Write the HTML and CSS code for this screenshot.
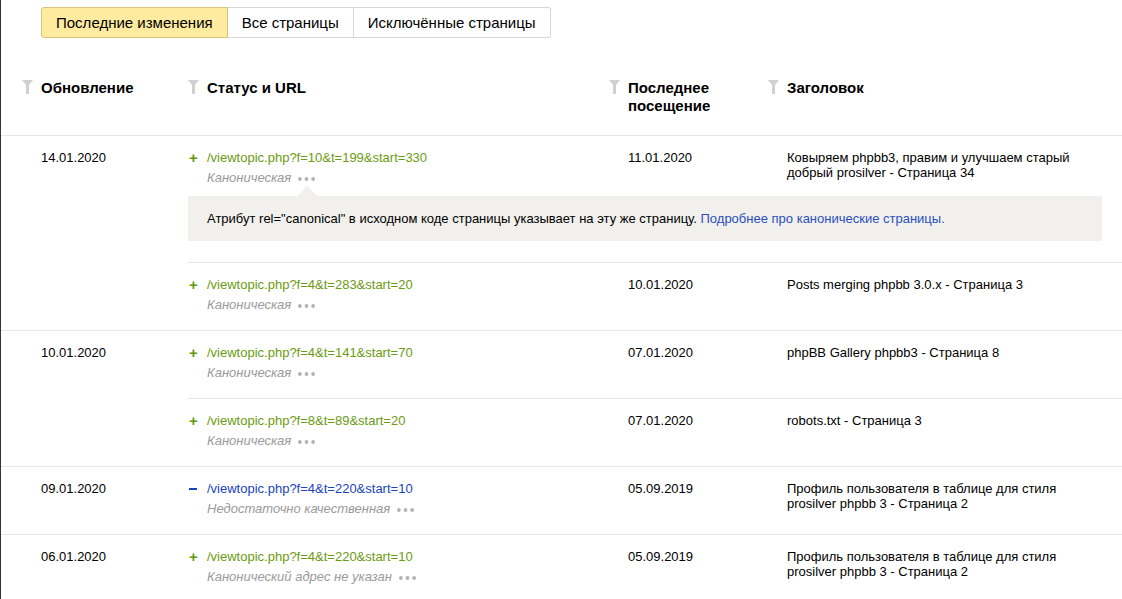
FILE: index.html
```html
<!DOCTYPE html>
<html lang="ru">
<head>
  <meta charset="UTF-8">
  <title>Индексирование — Страницы в поиске</title>
  <link rel="stylesheet" href="styles.css">
</head>
<body>
  <div class="page">
    <div class="tabs">
      <button class="tab tab-active">Последние изменения</button>
      <button class="tab">Все страницы</button>
      <button class="tab">Исключённые страницы</button>
    </div>

    <div class="thead">
      <div class="th th-first"><svg class="funnel" viewBox="0 0 11 14"><path d="M0 0H11L7 5V14H4V5Z"/></svg><span>Обновление</span></div>
      <div class="th"><svg class="funnel" viewBox="0 0 11 14"><path d="M0 0H11L7 5V14H4V5Z"/></svg><span>Статус и URL</span></div>
      <div class="th"><svg class="funnel" viewBox="0 0 11 14"><path d="M0 0H11L7 5V14H4V5Z"/></svg><span>Последнее посещение</span></div>
      <div class="th"><svg class="funnel" viewBox="0 0 11 14"><path d="M0 0H11L7 5V14H4V5Z"/></svg><span>Заголовок</span></div>
    </div>

    <div class="group">
      <div class="group-date">14.01.2020</div>
      <div class="group-rows">
        <div class="row">
          <div class="cell-url">
            <span class="mark mark-add">+</span>
            <div>
              <a class="url url-add" href="#">/viewtopic.php?f=10&amp;t=199&amp;start=330</a>
              <div class="status">Каноническая <svg class="dots" viewBox="0 0 18 4"><circle cx="2" cy="2" r="2"/><circle cx="9" cy="2" r="2"/><circle cx="16" cy="2" r="2"/></svg></div>
            </div>
          </div>
          <div class="cell-date">11.01.2020</div>
          <div class="cell-title">Ковыряем phpbb3, правим и улучшаем старый добрый prosilver - Страница 34</div>
          <div class="callout">Атрибут rel="canonical" в исходном коде страницы указывает на эту же страницу. <a href="#">Подробнее про канонические страницы.</a></div>
        </div>
        <div class="row">
          <div class="cell-url">
            <span class="mark mark-add">+</span>
            <div>
              <a class="url url-add" href="#">/viewtopic.php?f=4&amp;t=283&amp;start=20</a>
              <div class="status">Каноническая <svg class="dots" viewBox="0 0 18 4"><circle cx="2" cy="2" r="2"/><circle cx="9" cy="2" r="2"/><circle cx="16" cy="2" r="2"/></svg></div>
            </div>
          </div>
          <div class="cell-date">10.01.2020</div>
          <div class="cell-title">Posts merging phpbb 3.0.x - Страница 3</div>
        </div>
      </div>
    </div>

    <div class="group">
      <div class="group-date">10.01.2020</div>
      <div class="group-rows">
        <div class="row">
          <div class="cell-url">
            <span class="mark mark-add">+</span>
            <div>
              <a class="url url-add" href="#">/viewtopic.php?f=4&amp;t=141&amp;start=70</a>
              <div class="status">Каноническая <svg class="dots" viewBox="0 0 18 4"><circle cx="2" cy="2" r="2"/><circle cx="9" cy="2" r="2"/><circle cx="16" cy="2" r="2"/></svg></div>
            </div>
          </div>
          <div class="cell-date">07.01.2020</div>
          <div class="cell-title">phpBB Gallery phpbb3 - Страница 8</div>
        </div>
        <div class="row">
          <div class="cell-url">
            <span class="mark mark-add">+</span>
            <div>
              <a class="url url-add" href="#">/viewtopic.php?f=8&amp;t=89&amp;start=20</a>
              <div class="status">Каноническая <svg class="dots" viewBox="0 0 18 4"><circle cx="2" cy="2" r="2"/><circle cx="9" cy="2" r="2"/><circle cx="16" cy="2" r="2"/></svg></div>
            </div>
          </div>
          <div class="cell-date">07.01.2020</div>
          <div class="cell-title">robots.txt - Страница 3</div>
        </div>
      </div>
    </div>

    <div class="group">
      <div class="group-date">09.01.2020</div>
      <div class="group-rows">
        <div class="row">
          <div class="cell-url">
            <span class="mark mark-del"></span>
            <div>
              <a class="url url-del" href="#">/viewtopic.php?f=4&amp;t=220&amp;start=10</a>
              <div class="status">Недостаточно качественная <svg class="dots" viewBox="0 0 18 4"><circle cx="2" cy="2" r="2"/><circle cx="9" cy="2" r="2"/><circle cx="16" cy="2" r="2"/></svg></div>
            </div>
          </div>
          <div class="cell-date">05.09.2019</div>
          <div class="cell-title">Профиль пользователя в таблице для стиля prosilver phpbb 3 - Страница 2</div>
        </div>
      </div>
    </div>

    <div class="group">
      <div class="group-date">06.01.2020</div>
      <div class="group-rows">
        <div class="row">
          <div class="cell-url">
            <span class="mark mark-add">+</span>
            <div>
              <a class="url url-add" href="#">/viewtopic.php?f=4&amp;t=220&amp;start=10</a>
              <div class="status">Канонический адрес не указан <svg class="dots" viewBox="0 0 18 4"><circle cx="2" cy="2" r="2"/><circle cx="9" cy="2" r="2"/><circle cx="16" cy="2" r="2"/></svg></div>
            </div>
          </div>
          <div class="cell-date">05.09.2019</div>
          <div class="cell-title">Профиль пользователя в таблице для стиля prosilver phpbb 3 - Страница 2</div>
        </div>
      </div>
    </div>
  </div>
</body>
</html>
```

FILE: styles.css
```css
body {
  margin: 0;
  font-family: "Liberation Sans", Arial, sans-serif;
  color: #000;
  background: #fff;
  border-left: 1px solid #2f353b;
  min-height: 599px;
  box-sizing: border-box;
}

.page {
  width: 1121px;
}

/* tabs */
.tabs {
  display: flex;
  margin: 7px 0 0 40px;
}

.tab {
  font: 15px "Liberation Sans", Arial, sans-serif;
  color: #000;
  height: 31px;
  padding: 0 14px;
  background: #fff;
  border: 1px solid #d6d6d6;
  border-left: none;
  cursor: pointer;
}

.tab:first-child {
  border-left: 1px solid #d9c27c;
  border-radius: 3px 0 0 3px;
}

.tab:last-child {
  border-radius: 0 3px 3px 0;
}

.tab-active {
  background: #ffeba0;
  border-color: #d9c27c;
}

/* header */
.thead {
  display: grid;
  grid-template-columns: 187px 421px 159px 1fr;
  border-bottom: 1px solid #e6e6e6;
  padding: 41px 0 20px;
}

.th {
  display: flex;
  align-items: flex-start;
  font-weight: bold;
  font-size: 15px;
  line-height: 18px;
  padding-right: 20px;
}

.th-first {
  padding-left: 21px;
}

.funnel {
  width: 11px;
  height: 14px;
  margin: 1px 8px 0 0;
  flex-shrink: 0;
  fill: #d0d0d0;
}

/* body rows */
.group {
  display: grid;
  grid-template-columns: 187px 1fr;
  border-bottom: 1px solid #e6e6e6;
  font-size: 13px;
}

.group-date {
  padding: 12px 0 0 40px;
  line-height: 20px;
}

.row {
  display: grid;
  grid-template-columns: 421px 159px 1fr;
  padding: 12px 0 15px;
}

.row + .row {
  border-top: 1px solid #e6e6e6;
}

.cell-url {
  display: flex;
  line-height: 20px;
}

.mark {
  width: 19px;
  flex-shrink: 0;
  font-weight: bold;
  font-size: 15px;
}

.mark-add {
  color: #5f9a0c;
  padding-left: 1px;
  box-sizing: border-box;
}

.mark-del::before {
  content: "";
  display: block;
  width: 8px;
  height: 2px;
  margin: 9px 0 0 1px;
  background: #2043bd;
}

.url {
  text-decoration: none;
}

.url-add {
  color: #6b9b12;
}

.url-del {
  color: #2043bd;
}

.status {
  color: #9a9a9a;
  font-style: italic;
}

.dots {
  width: 17px;
  height: 4px;
  margin-left: 3px;
  fill: #b3b3b3;
  vertical-align: middle;
}

.cell-date {
  padding-left: 19px;
  line-height: 20px;
}

.cell-title {
  padding: 2px 40px 0 19px;
  line-height: 15px;
}

.callout {
  grid-column: 1 / -1;
  position: relative;
  margin: 8px 20px 6px 0;
  padding: 14px 19px;
  line-height: 17px;
  background: #f1f0ed;
}

.callout::before {
  content: "";
  position: absolute;
  top: -10px;
  left: 109px;
  border-left: 10px solid transparent;
  border-right: 10px solid transparent;
  border-bottom: 10px solid #f1f0ed;
}

.callout a {
  color: #2a4fbd;
  text-decoration: none;
}
```
